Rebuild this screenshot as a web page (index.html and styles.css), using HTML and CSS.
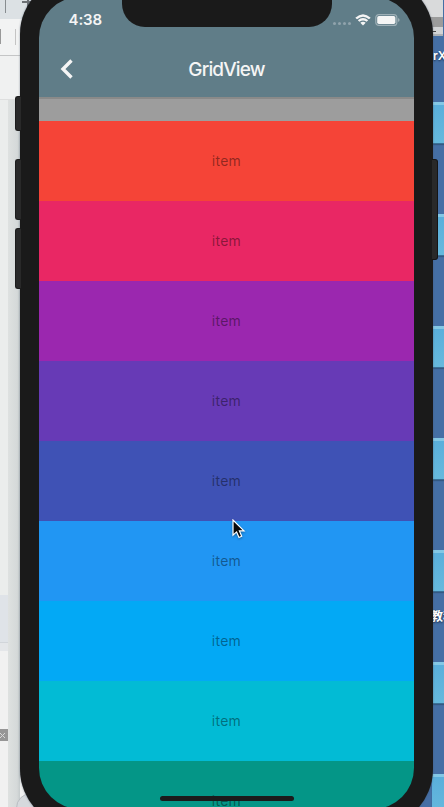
FILE: index.html
```html
<!DOCTYPE html>
<html lang="en">
<head>
<meta charset="utf-8">
<title>GridView</title>
<link rel="stylesheet" href="styles.css">
</head>
<body>
<main class="desktop">
  <aside class="window">
    <div class="window-tabs"><span class="tab-line"></span><span class="tab-plus"></span></div>
    <div class="window-tools"><span class="tool-stub"></span><span class="tool-line"></span></div>
    <div class="window-head"></div>
    <div class="window-body"></div>
    <div class="window-selected"></div>
    <div class="window-list"></div>
    <div class="window-close"><svg width="7" height="7" viewBox="0 0 7 7"><path d="M1 1l5 5M6 1L1 6"/></svg></div>
    <div class="window-foot"></div>
    <span class="window-shade"></span>
    <span class="window-circle"></span>
  </aside>
  <aside class="icons">
    <div class="drive"><span class="drive-base"></span></div>
    <div class="label label-top">rX</div>
    <div class="folder"></div>
    <div class="folder"></div>
    <div class="folder"></div>
    <div class="folder"></div>
    <div class="folder"></div>
    <div class="label label-cjk">教程</div>
    <div class="folder"></div>
    <div class="folder"></div>
  </aside>
  <section class="phone">
    <span class="key key-mute"></span>
    <span class="key key-up"></span>
    <span class="key key-down"></span>
    <span class="key key-power"></span>
    <div class="screen">
      <header class="appbar">
        <div class="status">
          <span class="time">4:38</span>
          <span class="signals">
            <span class="dots"><i></i><i></i><i></i><i></i></span>
            <svg class="wifi" width="16" height="12" viewBox="0 0 16 12"><path d="M.3 3.700Q8-3.300 15.700 3.700L14 5.300Q8 .3 2 5.300Z"/><path d="M2.800 6.200Q8 1.900 13.200 6.200L11.600 7.800Q8 5 4.400 7.800Z"/><path d="M5.300 8.800Q8 6.800 10.700 8.800L8 11.500Z"/></svg>
            <svg class="battery" width="25" height="12" viewBox="0 0 25 12"><rect class="shell" x=".8" y=".6" width="21" height="10.800" rx="3"/><rect class="charge" x="2.200" y="2" width="18.200" height="8" rx="1.700"/><path class="cap" d="M22.900 4Q24.600 4.500 24.600 6T22.900 8Z"/></svg>
          </span>
        </div>
        <div class="toolbar">
          <svg class="back" width="14" height="22" viewBox="0 0 14 22"><path d="M11.500 2.500L3 11L11.500 19.500"/></svg>
          <h1>GridView</h1>
        </div>
      </header>
      <div class="list">
        <div class="row gray"></div>
        <div class="row red">item</div>
        <div class="row pink">item</div>
        <div class="row purple">item</div>
        <div class="row violet">item</div>
        <div class="row indigo">item</div>
        <div class="row blue">item</div>
        <div class="row sky">item</div>
        <div class="row cyan">item</div>
        <div class="row teal">item</div>
      </div>
      <span class="notch"></span>
      <span class="home"></span>
    </div>
  </section>
  <svg class="cursor" width="14" height="21" viewBox="0 0 14 21"><path d="M1 1V16.200L4.600 12.900L7 18.500L9.700 17.300L7.400 11.900H12Z"/></svg>
</main>
</body>
</html>
```

FILE: styles.css
```css
* { box-sizing: border-box; }
body { margin: 0; overflow: hidden; font-family: Inter, "Liberation Sans", sans-serif; }
.desktop { position: relative; width: 444px; height: 807px; overflow: hidden; display: flex; justify-content: space-between; background: #456fa5; }

.window { position: relative; width: 100px; display: flex; flex-direction: column; background: #ebedec; }
.window-tabs { display: flex; gap: 16px; height: 19px; padding-left: 5px; background: #dce1e4; }
.tab-line { width: 1px; height: 13px; background: #888d90; }
.tab-plus { width: 11px; height: 8px; background: linear-gradient(#6d7174, #6d7174) 50% 0 / 2px 8px no-repeat, linear-gradient(#6d7174, #6d7174) 0 1px / 11px 2px no-repeat; }
.window-tools { display: flex; gap: 14px; height: 37px; padding-top: 10px; background: #f2f3f3; border-bottom: 1px solid #c4c5c6; }
.tool-stub { width: 1px; height: 15px; background: #999; }
.tool-line { width: 1px; height: 16px; background: #c4c4c4; }
.window-head { height: 44px; background: #f0f1f1; border-bottom: 1px solid #dedfdf; }
.window-body { height: 495px; }
.window-selected { height: 48px; background: #dfe3e8; border-bottom: 1px solid #d1d5da; }
.window-list { height: 86px; border-top: 8px solid #e4e6e9; background: #f1f1f1; }
.window-close { display: flex; align-items: center; width: 8px; height: 12px; background: #969696; }
.window-close svg { margin-left: -1px; fill: none; stroke: #d8d8d8; }
.window-foot { flex: 1; background: #f1f1f1; }
.window-shade { position: absolute; left: 8px; top: 100px; bottom: 0; width: 12px; background: linear-gradient(90deg, #dee1e0, #d5d9d9 75%, #c5cbcc); }
.window-circle { position: absolute; left: 16px; top: 793px; width: 30px; height: 30px; border: 1px solid #b9bdc2; border-radius: 50%; background: #d6d9dd; }

.icons { width: 30px; min-height: 830px; display: flex; flex-direction: column; padding-left: 18px; }
.drive { flex: none; width: 29px; height: 36px; margin: 0 0 11px -18px; padding-top: 17px; background: #d9dadb; border-radius: 0 0 3px 3px; }
.drive-base { display: block; height: 19px; border-top: 10px solid #9c9c9c; border-bottom: 2px solid #aeb2b6; background: linear-gradient(#444, #444) 18px 4px / 4px 1px no-repeat #d2d4d6; }
.label { height: 18px; color: #fff; font-size: 12px; font-weight: 600; line-height: 18px; white-space: nowrap; text-shadow: 0 1px 2px #172b46; }
.label-top { margin-left: 1px; margin-bottom: 37px; }
.label-cjk { position: relative; margin: -55px 0 37px -1px; font-family: "Noto Sans CJK SC", sans-serif; }
.folder { flex: none; height: 42px; margin-bottom: 70px; border-top: 3px solid #84c8e5; border-bottom: 1px solid #3a7198; background: linear-gradient(#5aafdb, #66b9dd); box-shadow: 0 1px 1px #345983; }

.phone { position: absolute; left: 20px; top: -22px; width: 413px; height: 850px; padding: 19px; border-radius: 56px 56px 59px 59px; background: #1a1a1a; box-shadow: 0 0 2px rgba(70, 85, 105, .65); }
.screen { position: relative; width: 375px; height: 812px; overflow: hidden; border-radius: 41px; }
.key { position: absolute; left: -5px; width: 6px; background: #292929; border: 1px solid #1c1c1c; border-right: 0; border-radius: 3px 0 0 3px; }
.key-mute { top: 118px; height: 35px; }
.key-up { top: 181px; height: 61px; }
.key-down { top: 250px; height: 61px; }
.key-power { left: 412px; top: 181px; height: 101px; border: 1px solid #151515; border-left: 0; border-radius: 0 3px 3px 0; }

.appbar { height: 100px; background: #607d88; color: #f5f5f5; }
.status { display: flex; justify-content: space-between; height: 44px; padding: 13px 14px 0 29.5px; }
.time { font-size: 15px; font-weight: 600; line-height: 20px; letter-spacing: -.1px; }
.signals { display: flex; align-items: flex-start; padding-top: 4px; }
.dots { display: flex; gap: 2px; margin: 8px 4px 0 0; }
.dots i { width: 3px; height: 3px; border-radius: 50%; background: #90a3ac; }
.wifi { margin-right: 4px; fill: #f5f5f5; }
.battery .shell { fill: none; stroke: #9dafb6; stroke-width: 1.2; }
.battery .charge { fill: #f5f5f5; }
.battery .cap { fill: #9dafb6; }
.toolbar { position: relative; display: flex; align-items: center; justify-content: center; height: 56px; padding-top: 2px; }
.toolbar h1 { margin: 0; font-size: 19px; font-weight: 550; line-height: 24px; letter-spacing: -.85px; }
.back { position: absolute; left: 21px; top: 17px; fill: none; stroke: #f5f5f5; stroke-width: 3.4; stroke-linecap: butt; }

.list { display: flex; flex-direction: column; }
.row { flex: none; display: flex; align-items: center; justify-content: center; height: 80px; padding-bottom: 2px; color: rgba(0, 0, 0, .42); font-size: 14px; font-weight: 400; letter-spacing: .25px; }
.gray { height: 24px; background: #9d9d9d; border-top: 2px solid #8a8a89; }
.red { background: #f54437; }
.pink { background: #e92764; }
.purple { background: #9b27af; }
.violet { background: #673ab6; }
.indigo { background: #3f52b5; }
.blue { background: #2196f3; }
.sky { background: #03a9f5; }
.cyan { background: #02bbd5; }
.teal { background: #049687; }
.notch { position: absolute; left: 83px; top: -20px; width: 210px; height: 50px; border-radius: 0 0 23px 23px; background: #1a1a1a; }
.home { position: absolute; left: 121px; top: 799px; width: 134px; height: 5px; border-radius: 3px; background: #1b1b1b; }
.cursor { position: absolute; left: 232px; top: 519px; fill: #080808; stroke: #fff; stroke-width: 1.2; filter: drop-shadow(0 1px 1px rgba(0, 0, 0, .35)); }
```
